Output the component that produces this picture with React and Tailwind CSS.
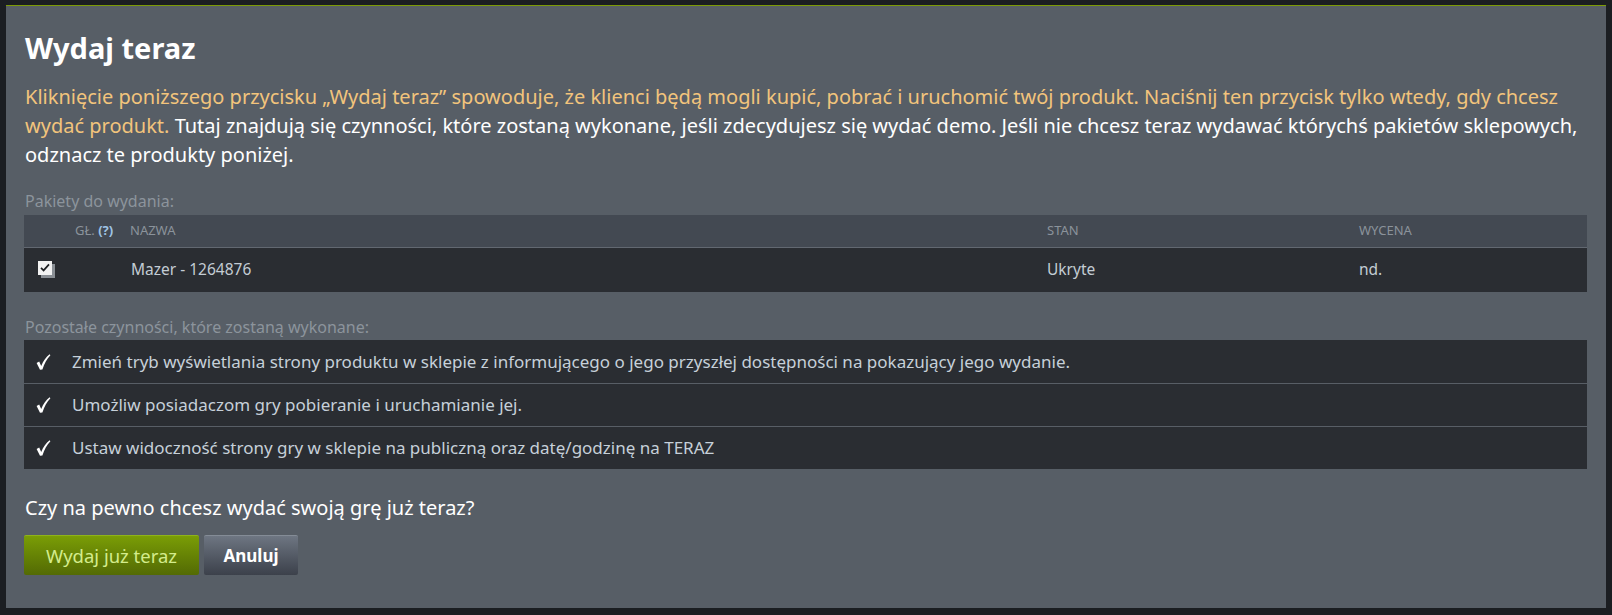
import React from 'react';

const font = { fontFamily: '"Noto Sans", "Open Sans", sans-serif' };

const actions = [
  'Zmień tryb wyświetlania strony produktu w sklepie z informującego o jego przyszłej dostępności na pokazujący jego wydanie.',
  'Umożliw posiadaczom gry pobieranie i uruchamianie jej.',
  'Ustaw widoczność strony gry w sklepie na publiczną oraz datę/godzinę na TERAZ',
];

const CheckMark = () => (
  <svg width="16" height="18" viewBox="0 0 16 17" className="shrink-0">
    <path d="M1.6 9.6 L4.2 8 L6.2 12.4 C8.4 7.4 11 3.6 14.6 0.8 L15.4 1.8 C11.8 5.4 9.4 10 7.4 16 L5 16.2 Z" fill="#ffffff" />
  </svg>
);

const Checkbox = () => (
  <div className="relative w-[17px] h-[17px]">
    <div className="absolute left-[3px] top-[3px] w-[14px] h-[14px] bg-[#8a8f95]" />
    <div className="absolute left-0 top-0 w-[14px] h-[14px] bg-[#f2f2f2] flex items-center justify-center">
      <svg width="10" height="9" viewBox="0 0 10 9">
        <path d="M1 4.8 L3.6 7.4 L9 1.4" stroke="#1d1f22" strokeWidth="1.7" fill="none" />
      </svg>
    </div>
  </div>
);

export default function App() {
  return (
    <div className="w-[1612px] h-[615px] bg-[#1b1e22] pt-[5px] pl-[6px] pr-[6px] pb-[7px]" style={font}>
      <div className="h-full bg-[#575e66] border-t border-[#7c9b06] pl-[18px] pr-[19px] pt-[25px]">
        {/* Заголовок */}
        <h1 className="text-[29px] leading-[34px] font-bold text-white pl-[1px]">Wydaj teraz</h1>

        <p className="mt-[17px] text-[20px] leading-[29px] text-white pl-[1px] pr-[6px]">
          <span className="text-[#f2c47c]">
            Kliknięcie poniższego przycisku „Wydaj teraz” spowoduje, że klienci będą mogli kupić, pobrać i uruchomić twój produkt. Naciśnij ten przycisk tylko wtedy, gdy chcesz wydać produkt.
          </span>{' '}
          Tutaj znajdują się czynności, które zostaną wykonane, jeśli zdecydujesz się wydać demo. Jeśli nie chcesz teraz wydawać którychś pakietów sklepowych, odznacz te produkty poniżej.
        </p>

        {/* Пакеты */}
        <div className="mt-[22px] mb-[4px] pl-[1px] text-[16px] leading-[20px] text-[#8c949c]">Pakiety do wydania:</div>
        <div className="w-[1563px]">
          <div className="grid grid-cols-[51px_55px_917px_312px_1fr] h-[33px] items-center bg-[#434952] border-b border-[#626871] text-[13px] uppercase text-[#8b939b]">
            <div />
            <div>
              Gł. <span className="font-bold text-[#9fc3e4]">(?)</span>
            </div>
            <div>Nazwa</div>
            <div>Stan</div>
            <div>Wycena</div>
          </div>
          <div className="grid grid-cols-[51px_55px_917px_312px_1fr] h-[44px] items-center bg-[#2a2d32] text-[15.5px] text-[#c3ccd4]">
            <div className="pl-[14px] pb-[2px]">
              <Checkbox />
            </div>
            <div />
            <div className="pl-[1px]">Mazer - 1264876</div>
            <div>Ukryte</div>
            <div>nd.</div>
          </div>
        </div>

        {/* Остальные действия */}
        <div className="mt-[25px] mb-[3px] pl-[1px] text-[16px] leading-[20px] text-[#8c949c]">
          Pozostałe czynności, które zostaną wykonane:
        </div>
        <div className="w-[1563px] bg-[#2a2d32]">
          {actions.map((text, i) => (
            <div
              key={i}
              className={
                'h-[43px] flex items-center pl-[11px] gap-[21px] text-[17px] text-[#c6d0d9] ' +
                (i > 0 ? 'border-t border-[#585e66]' : '')
              }
            >
              <CheckMark />
              <span>{text}</span>
            </div>
          ))}
        </div>

        <div className="mt-[24px] pl-[1px] text-[20px] leading-[29px] text-white">
          Czy na pewno chcesz wydać swoją grę już teraz?
        </div>

        <div className="mt-[13px] flex gap-[5px]">
          <button className="h-[40px] w-[175px] rounded-[2px] bg-gradient-to-b from-[#7a9d06] to-[#536a04] border-t border-[#8fb31a] text-[18.5px] text-[#d4ec8c]">
            Wydaj już teraz
          </button>
          <button className="h-[40px] w-[94px] rounded-[2px] bg-gradient-to-b from-[#6e7682] to-[#3c414b] border-t border-[#848c96] text-[17px] font-bold text-white">
            Anuluj
          </button>
        </div>
      </div>
    </div>
  );
}
